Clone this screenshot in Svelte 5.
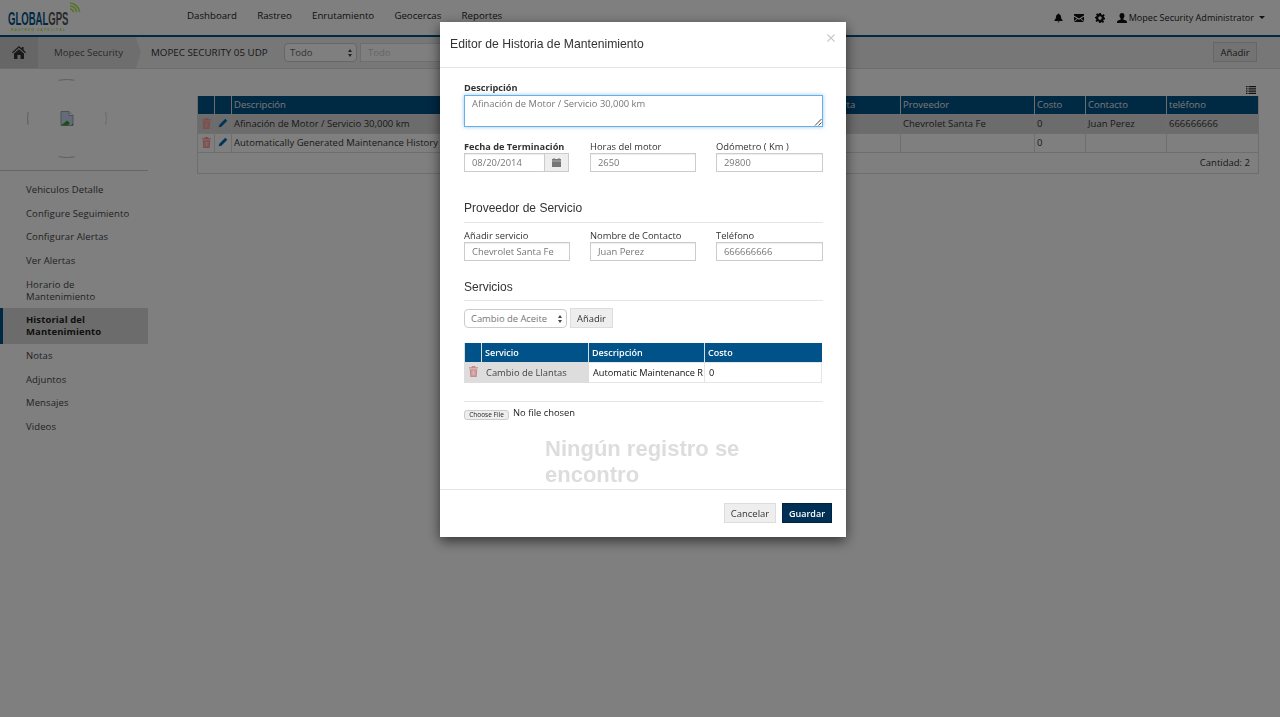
<script>
  const nav = ['Dashboard', 'Rastreo', 'Enrutamiento', 'Geocercas', 'Reportes'];
  const side = [
    { t: 'Vehiculos Detalle' }, { t: 'Configure Seguimiento' }, { t: 'Configurar Alertas' }, { t: 'Ver Alertas' },
    { t: 'Horario de Mantenimiento' }, { t: 'Historial del Mantenimiento', active: true },
    { t: 'Notas' }, { t: 'Adjuntos' }, { t: 'Mensajes' }, { t: 'Videos' }
  ];
  const rows = [
    { d: 'Afinación de Motor / Servicio 30,000 km', f: '', p: 'Chevrolet Santa Fe', c: '0', n: 'Juan Perez', t: '666666666', sel: true },
    { d: 'Automatically Generated Maintenance History', f: '', p: '', c: '0', n: '', t: '' }
  ];
  const trash = 'M3.200 0h3.600l.5 1.300H10v1.400H0V1.300h2.700zM.8 3.500h8.400L8.600 12H1.400zM3.100 5v5.500h.6V5zM4.700 5v5.500h.6V5zM6.300 5v5.500h.6V5z';
  const pencil = 'M8 .8l2.200 2.200-6.500 6.500-3 .8.800-3z';
</script>

<div class="page">
  <header class="top">
    <div class="logo">
      <svg class="wifi" viewBox="0 0 12 11" width="12" height="11">
        <path d="M1 1.200c5 0 9 4 9.700 9M1 4.200c3.500 0 6 2.600 6.700 6M1 7.200c1.800 0 3.200 1.400 3.700 3" fill="none" stroke="#b4e85a" stroke-width="1.700"/>
      </svg>
      <div class="brand"><b>GLOBAL</b><span>GPS</span></div>
      <div class="tag">RASTREO SATELITAL</div>
    </div>
    <nav class="nav">
      {#each nav as n}<span>{n}</span>{/each}
    </nav>
    <div class="user">
      <svg viewBox="0 0 10 10" width="9" height="10"><path d="M5 0c.6 0 .8.400.8.800 1.500.5 2 1.700 2 3.200 0 1.800 1 2.700 1.700 3.500v.7H.5v-.7C1.200 6.700 2.200 5.800 2.200 4c0-1.500.5-2.700 2-3.200C4.200.4 4.400 0 5 0zM4 9h2c0 .6-.4 1-1 1s-1-.4-1-1z" fill="#111"/></svg>
      <svg viewBox="0 0 10 8" width="10" height="8"><path d="M0 0h10v1.500L5 4.500 0 1.500zM0 2.800l3 1.800L0 7zM10 2.800v4.200L7 4.600zM3.700 5l1.300.8L6.300 5 10 8H0z" fill="#111"/></svg>
      <svg viewBox="0 0 10 10" width="10" height="10"><path d="M4 0h2l.3 1.400 1.100.5 1.300-.8 1 1.300-1 1 .3 1.100L10 4.800v1.600l-1.300.2-.4 1.200.8 1.200-1.300 1-1-.9-1.100.4L5.500 10h-1.500l-.2-1.400-1.100-.4-1.100.8-1.100-1.100.8-1.200-.4-1.100L0 5.300V3.900l1.300-.3.500-1.100-.8-1.100 1.200-1.200 1.100.8 1.100-.5zM5 3.300a1.800 1.800 0 100 3.600 1.800 1.800 0 000-3.600z" fill="#111" fill-rule="evenodd"/></svg>
      <span class="who">
        <svg viewBox="0 0 10 10" width="10" height="10"><path d="M5 0c1.700 0 2.500 1.300 2.500 2.800 0 1.200-.6 2.300-1.200 2.800v.8c1.300.5 3.700 1 3.700 2.400V10H0V8.800c0-1.400 2.400-1.900 3.700-2.400v-.8C3.100 5.100 2.500 4 2.500 2.800 2.500 1.300 3.300 0 5 0z" fill="#111"/></svg>
        Mopec Security Administrator
        <i class="caret"></i>
      </span>
    </div>
  </header>

  <div class="crumbs">
    <div class="home">
      <svg viewBox="0 0 14 13" width="14" height="13"><path d="M7 0l2.800 2.500V1h1.800v3.100L14 6.300l-.8.900L7 1.800.8 7.200 0 6.300zM2 7.500L7 3.200l5 4.300V13H8.500V9h-3v4H2z" fill="#333"/></svg>
    </div>
    <div class="crumb">Mopec Security</div>
    <div class="unit">MOPEC SECURITY 05 UDP</div>
    <div class="fake-select first">Todo<i class="updown"></i></div>
    <div class="fake-input">Todo</div>
    <button class="add">Añadir</button>
  </div>

  <div class="body">
    <aside class="side">
      <div class="avatar">
        <div class="frame">
          <svg viewBox="0 0 14 15" width="14" height="15">
            <path d="M1 .5h8l4 4v10H1z" fill="#c9d8ef" stroke="#9aa4b0"/>
            <path d="M1 14.500l6-5 3 2.500-2 2.500z" fill="#3f9a3c"/>
            <path d="M9 .5v4h4" fill="#fff" stroke="#9aa4b0"/>
            <path d="M11 14.500l2-2v2z" fill="#3f9a3c"/>
          </svg>
        </div>
      </div>
      <ul class="menu">
        {#each side as s}
          <li class:active={s.active}>{s.t}</li>
        {/each}
      </ul>
    </aside>

    <main class="main">
      <div class="tools">
        <svg viewBox="0 0 10 8" width="10" height="8"><path d="M0 0h1.500v1.200H0zM2.500 0H10v1.200H2.500zM0 2.300h1.500v1.200H0zM2.500 2.300H10v1.200H2.500zM0 4.600h1.500v1.200H0zM2.500 4.600H10v1.200H2.500zM0 6.800h1.500V8H0zM2.500 6.800H10V8H2.500z" fill="#222"/></svg>
      </div>
      <table class="grid">
        <colgroup>
          <col class="c1" /><col class="c2" /><col class="c3" /><col class="c4" /><col class="c5" /><col class="c6" /><col class="c7" /><col class="c8" />
        </colgroup>
        <thead>
          <tr><th></th><th></th><th>Descripción</th><th>Fecha de Alerta</th><th>Proveedor</th><th>Costo</th><th>Contacto</th><th>teléfono</th></tr>
        </thead>
        <tbody>
          {#each rows as r}
            <tr class:sel={r.sel}>
              <td class="ico"><svg viewBox="0 0 10 12" width="9" height="11"><path d={trash} fill="#ff9c98"/></svg></td>
              <td class="ico"><svg viewBox="0 0 11 11" width="10" height="10"><path d={pencil} fill="#0068b0"/></svg></td>
              <td>{r.d}</td><td>{r.f}</td><td>{r.p}</td><td>{r.c}</td><td>{r.n}</td><td>{r.t}</td>
            </tr>
          {/each}
        </tbody>
        <tfoot>
          <tr><td colspan="8">Cantidad: 2</td></tr>
        </tfoot>
      </table>
    </main>
  </div>
</div>

<div class="backdrop"></div>

<div class="modal">
  <div class="m-head">
    <h4>Editor de Historia de Mantenimiento</h4>
    <svg class="close" viewBox="0 0 8 8" width="8" height="8"><path d="M.5.5l7 7M7.500.5l-7 7" stroke="#c8c8c8" stroke-width="1.100" fill="none"/></svg>
  </div>
  <div class="m-body">
    <label class="strong" for="d">Descripción</label>
    <div class="ta" id="d">Afinación de Motor / Servicio 30,000 km
      <svg class="grip" viewBox="0 0 8 8" width="8" height="8"><path d="M7.500 1L1 7.500M7.500 4.500L4.500 7.500" stroke="#444" fill="none"/></svg>
    </div>

    <div class="three r1">
      <div>
        <div class="lab strong">Fecha de Terminación</div>
        <div class="date">
          <div class="val">08/20/2014</div>
          <div class="cal"><svg viewBox="0 0 9 9" width="9" height="9"><path d="M0 1h1.500V0h1v1h4V0h1v1H9v1.700H0zM0 3.300h9V9H0z" fill="#777"/></svg></div>
        </div>
      </div>
      <div><div class="lab">Horas del motor</div><div class="inp">2650</div></div>
      <div><div class="lab">Odómetro ( Km )</div><div class="inp">29800</div></div>
    </div>

    <h5 class="sec s1">Proveedor de Servicio</h5>
    <div class="three r2">
      <div><div class="lab">Añadir servicio</div><div class="inp">Chevrolet Santa Fe</div></div>
      <div><div class="lab">Nombre de Contacto</div><div class="inp">Juan Perez</div></div>
      <div><div class="lab">Teléfono</div><div class="inp">666666666</div></div>
    </div>

    <h5 class="sec s2">Servicios</h5>
    <div class="pick">
      <div class="fake-select second">Cambio de Aceite<i class="updown"></i></div>
      <button class="add2">Añadir</button>
    </div>

    <table class="svc">
      <colgroup><col class="k1" /><col class="k2" /><col class="k3" /><col class="k4" /></colgroup>
      <thead><tr><th></th><th>Servicio</th><th>Descripción</th><th>Costo</th></tr></thead>
      <tbody>
        <tr>
          <td class="gr ico"><svg viewBox="0 0 10 12" width="9" height="11"><path d={trash} fill="#c98c8c"/></svg></td>
          <td class="gr">Cambio de Llantas</td>
          <td class="blk">Automatic Maintenance R</td>
          <td class="blk">0</td>
        </tr>
      </tbody>
    </table>

    <div class="file">
      <span class="choose">Choose File</span>
      <span class="nofile">No file chosen</span>
    </div>

    <div class="none">Ningún registro se encontro</div>
  </div>
  <div class="m-foot">
    <button class="cancel">Cancelar</button>
    <button class="save">Guardar</button>
  </div>
</div>

<style>
  :global(body) {
    margin: 0;
    background: #fff;
    font-family: "Open Sans", "DejaVu Sans", sans-serif;
    font-size: 9.500px;
    color: #333;
    overflow: hidden;
  }
  .page { width: 1280px; height: 717px; overflow: hidden; }

  .top {
    height: 35px;
    border-bottom: 2px solid #005288;
    display: flex;
    position: relative;
    background: #fff;
  }
  .logo { position: relative; width: 187px; height: 35px; flex: none; }
  .wifi { position: absolute; left: 69px; top: 2px; }
  .brand {
    position: absolute; left: 8px; top: 10px;
    font-family: "Liberation Sans", sans-serif;
    font-weight: 700; font-size: 18px; line-height: 18px;
    transform: scaleX(.53); transform-origin: 0 0;
    white-space: nowrap;
  }
  .brand b { color: #005288; }
  .brand span { color: #555; }
  .tag {
    position: absolute; left: 11px; top: 27.500px;
    font-size: 3.500px; line-height: 4px; letter-spacing: 1.200px; font-weight: 700;
    color: #b4e85a; white-space: nowrap;
  }
  .nav { display: flex; gap: 20.200px; font-size: 9.700px; line-height: 31px; color: #222; }
  .user {
    margin-left: auto; display: flex; align-items: center; gap: 11px;
    height: 35px; color: #222; padding-right: 15px; font-size: 9.050px;
  }
  .who { display: flex; align-items: center; gap: 2px; margin-left: 1px; white-space: nowrap; }
  .caret {
    width: 0; height: 0; margin-left: 3px;
    border-left: 3px solid transparent; border-right: 3px solid transparent; border-top: 3px solid #222;
  }

  .crumbs {
    height: 31px; border-bottom: 1px solid #ddd; background: #eee;
    display: flex; align-items: center;
  }
  .home {
    width: 38px; height: 31px; box-sizing: border-box; padding-left: 12px; background: #ccc; display: flex; align-items: center;
    flex: none;
  }
  .crumb {
    width: 97px; height: 31px; box-sizing: content-box; background: #ddd; padding-left: 16px; padding-right: 0; line-height: 31px;
    color: #555; clip-path: polygon(0 0, 95% 0, 100% 50%, 95% 100%, 0 100%);
    font-size: 9.700px; white-space: nowrap; flex: none; box-sizing: border-box; width: 103px;
  }
  .unit { margin-left: 10px; width: 133px; font-size: 9.800px; color: #333; white-space: nowrap; }
  .fake-select {
    box-sizing: border-box; border: 1px solid #ccc; border-radius: 4px; background: #fff; color: #666;
    position: relative; display: block; white-space: nowrap;
  }
  .first { width: 73px; height: 19px; line-height: 17px; padding-left: 5px; }
  .updown {
    position: absolute; right: 4px; top: 50%; width: 0; height: 0; margin-top: -4px;
    border-left: 2px solid transparent; border-right: 2px solid transparent; border-bottom: 3px solid #444;
  }
  .updown::after {
    content: ""; position: absolute; left: -2px; top: 5px; width: 0; height: 0;
    border-left: 2px solid transparent; border-right: 2px solid transparent; border-top: 3px solid #444;
  }
  .fake-input {
    width: 120px; height: 19px; box-sizing: border-box; border: 1px solid #ddd; margin-left: 3px; background: #fff;
    color: #ccc; line-height: 17px; padding-left: 7px;
  }
  button { font-family: inherit; }
  .add {
    margin-left: auto; margin-right: 23px; margin-top: -1px; width: 44px; height: 20px; padding: 0;
    background: #e6e6e6; border: 1px solid #ccc; color: #333; font-size: 9.500px;
  }

  .body { display: flex; height: 648px; }
  .side { width: 148px; flex: none; }
  .avatar {
    height: 101px; border-bottom: 1px solid #ccc;
    display: flex; justify-content: center;
  }
  .frame {
    width: 78px; height: 77px; margin-top: 10px; margin-left: -15px; border-radius: 40px;
    display: flex; align-items: center; justify-content: center;
    border: 1px solid #bbb; clip-path: polygon(40% 0, 60% 0, 60% 42%, 100% 42%, 100% 58%, 60% 58%, 60% 100%, 40% 100%, 40% 58%, 0 58%, 0 42%, 40% 42%);
  }
  .menu { list-style: none; margin: 7px 0 0; padding: 0; }
  .menu li {
    padding: 6.200px 10px 5.200px 26px; line-height: 12.200px; color: #444; font-size: 9.500px; letter-spacing: .1px;
  }
  .menu li.active {
    background: #d8d8d8; font-weight: 700; color: #222;
    padding-left: 23px; border-left: 3px solid #005288; padding-right: 30px;
  }

  .main { margin-left: 49px; width: 1061px; }
  .tools { height: 27px; display: flex; justify-content: flex-end; align-items: flex-end; padding-right: 2px; box-sizing: border-box; padding-bottom: 2px; }
  .grid { width: 1061px; table-layout: fixed; border-collapse: collapse; }
  .c1, .c2 { width: 17px; } .c3 { width: 553px; } .c4 { width: 116px; } .c5 { width: 134px; } .c6 { width: 51px; } .c7 { width: 81px; } .c8 { width: 92px; }
  .grid th {
    height: 17px; background: #005288; color: #eee; font-weight: 500; text-align: left; padding: 0 2px 1px;
    border: 1px solid #ddd; border-width: 0 1px; white-space: nowrap;
  }
  .grid td { height: 17px; padding: 0 2px 1px; border: 1px solid #ddd; white-space: nowrap; }
  .grid td.ico { padding: 0; }
  .grid tr.sel td { background: #d9d9d9; }
  .grid tfoot td { height: 19px; text-align: right; padding-right: 8px; }
  td.ico svg { display: block; margin: -2px auto 0; }

  .backdrop { position: fixed; inset: 0; background: rgba(0, 0, 0, .5); }

  .modal {
    position: fixed; left: 440px; top: 22px; width: 406px; height: 515px; background: #fff;
    box-shadow: 0 4px 12px rgba(0, 0, 0, .6); display: flex; flex-direction: column; color: #333;
    font-size: 9.400px;
  }
  .m-head {
    height: 45px; border-bottom: 1px solid #e5e5e5; flex: none; display: flex; align-items: center; justify-content: space-between;
    padding: 0 11px 0 10px;
  }
  h4 { margin: 0 0 2px; font: 400 12.200px "Liberation Sans", sans-serif; color: #333; }
  .close { margin-top: -14px; }
  .m-body { flex: 1; padding: 12px 23px 0 24px; overflow: hidden; min-height: 0; }
  .strong { font-weight: 700; font-size: 9.200px; }
  label { display: block; line-height: 15px; color: #333; white-space: nowrap; margin-bottom: -1px; }
  .lab { line-height: 12px; padding-top: 1px; margin-top: -1px; color: #333; white-space: nowrap; }
  .ta {
    box-sizing: border-box; height: 32px; margin-top: 1px; border: 1px solid #66afe9; padding: 1px 7px; color: #777; position: relative;
    box-shadow: 0 0 4px rgba(102, 175, 233, .7); line-height: 13px;
  }
  .grip { position: absolute; right: 0; bottom: 0; }
  .three { display: grid; grid-template-columns: 106px 106px 107px; column-gap: 20px; }
  .r1 { margin-top: 14px; }
  .inp, .val {
    box-sizing: border-box; height: 19px; border: 1px solid #ccc; line-height: 18px; padding-left: 7px; color: #777; white-space: nowrap; overflow: hidden;
    box-shadow: inset 0 1px 1px rgba(0, 0, 0, .075);
  }
  .date { display: flex; width: 105px; }
  .val { width: 80px; border-right: 0; flex: none; }
  .cal { flex: 1; height: 19px; box-sizing: border-box; border: 1px solid #ccc; background: #eee; display: flex; align-items: center; justify-content: center; }
  .sec {
    margin: 0; font: 400 12px/15px "Liberation Sans", sans-serif; color: #333; border-bottom: 1px solid #e5e5e5;
  }
  .s1 { margin-top: 29px; padding-bottom: 6px; }
  .r2 { margin-top: 7px; }
  .s2 { margin-top: 19px; padding-bottom: 5px; }
  .pick { display: flex; margin-top: 8px; gap: 3px; height: 19px; }
  .second { width: 103px; height: 19px; line-height: 17px; padding-left: 6px; color: #777; }
  .add2 { width: 43px; height: 20px; margin-top: -1px; padding: 0; background: #eee; border: 1px solid #ddd; color: #333; font-size: 9.400px; }
  .svc { margin-top: 15px; width: 357px; table-layout: fixed; border-collapse: collapse; }
  .k1 { width: 17px; } .k2 { width: 107px; } .k3 { width: 116px; } .k4 { width: 117px; }
  .svc th { height: 18px; background: #005288; color: #fff; text-align: left; padding: 0 3px 1px; font-weight: 600; font-size: 9px; border-left: 1px solid #ddd; }
  .svc td { height: 18px; padding: 0 0 1px 4px; border: 1px solid #e5e5e5; white-space: nowrap; overflow: hidden; }
  .svc td.gr { background: #ddd; color: #444; border-color: #ddd; }
  .svc td.blk { color: #111; font-size: 9.200px; }
  .svc td.ico { padding: 0; }
  .file { margin-top: 18px; border-top: 1px solid #e5e5e5; padding-top: 5px; display: flex; align-items: flex-start; gap: 4px; height: 14px; }
  .choose {
    width: 43px; height: 8px; margin-top: 3px; border: 1px solid #ccc; border-radius: 3px; background: #eee;
    font-size: 6.500px; line-height: 8px; text-align: center; color: #222;
  }
  .nofile { line-height: 11px; color: #222; }
  .none {
    margin: 15px 0 0 81px; width: 205px;
    font: 700 22px/26px "Liberation Sans", sans-serif; color: #ddd;
  }
  .m-foot {
    height: 48px; box-sizing: border-box; padding-bottom: 1px; border-top: 1px solid #e5e5e5; flex: none; display: flex; justify-content: flex-end; align-items: center; gap: 6px; padding-right: 14px;
  }
  .cancel { width: 52px; height: 20px; padding: 0; background: #eee; border: 1px solid #ddd; color: #333; font-size: 9.500px; }
  .save { width: 50px; height: 20px; padding: 0; background: #002f55; border: 1px solid #00243f; color: #fff; font-size: 9px; font-weight: 600; }
</style>
